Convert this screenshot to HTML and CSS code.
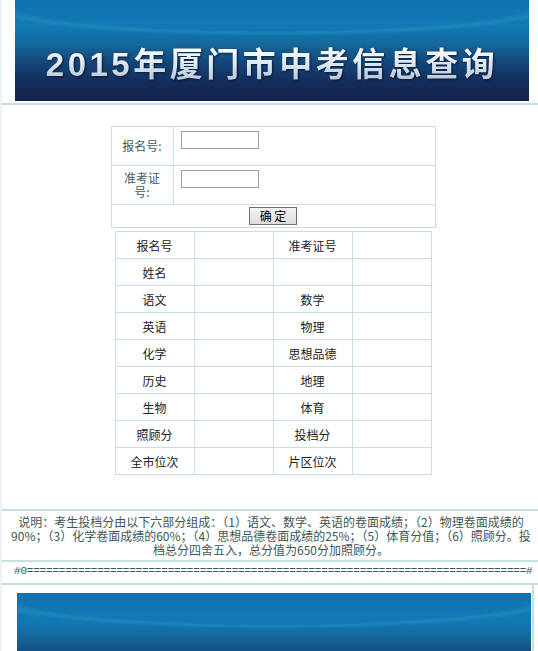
FILE: index.html
```html
<!DOCTYPE html>
<html lang="zh-CN">
  <head>
    <meta charset="UTF-8" />
    <title>2015年厦门市中考信息查询</title>
    <link rel="stylesheet" href="styles.css">
  </head>
  <body>
    <div class="page">
      <div class="banner">
        <h1>2015年厦门市中考信息查询</h1>
      </div>

      <div class="main">
        <form class="query-form" onsubmit="return false;">
          <table class="form-table">
            <tr>
              <td class="label">报名号:</td>
              <td class="field"><input type="text" name="bmh" /></td>
            </tr>
            <tr>
              <td class="label">准考证<br />号:</td>
              <td class="field"><input type="text" name="zkzh" /></td>
            </tr>
            <tr>
              <td colspan="2" class="submit"><button type="submit">确 定</button></td>
            </tr>
          </table>
        </form>

        <table class="score-table">
          <tr><td>报名号</td><td></td><td>准考证号</td><td></td></tr>
          <tr><td>姓名</td><td></td><td></td><td></td></tr>
          <tr><td>语文</td><td></td><td>数学</td><td></td></tr>
          <tr><td>英语</td><td></td><td>物理</td><td></td></tr>
          <tr><td>化学</td><td></td><td>思想品德</td><td></td></tr>
          <tr><td>历史</td><td></td><td>地理</td><td></td></tr>
          <tr><td>生物</td><td></td><td>体育</td><td></td></tr>
          <tr><td>照顾分</td><td></td><td>投档分</td><td></td></tr>
          <tr><td>全市位次</td><td></td><td>片区位次</td><td></td></tr>
        </table>
      </div>

      <p class="note">
        说明：考生投档分由以下六部分组成：（1）语文、数学、英语的卷面成绩；（2）物理卷面成绩的90%；（3）化学卷面成绩的60%；（4）思想品德卷面成绩的25%；（5）体育分值；（6）照顾分。投档总分四舍五入，总分值为650分加照顾分。
      </p>

      <p class="divider">#0==============================================================================#</p>

      <div class="footer">
        <div class="banner banner-bottom"></div>
      </div>
    </div>
  </body>
</html>
```

FILE: styles.css
```css
html, body {
  margin: 0;
  padding: 0;
  background: #fff;
}
body {
  font-family: "Noto Sans CJK SC", "DejaVu Sans", sans-serif;
  font-size: 12px;
  color: #333;
  height: 651px;
  overflow: hidden;
}
.page {
  border-left: 2px solid #eaf3f9;
  min-height: 651px;
}

/* header picture */
.banner {
  margin: 0 9px 0 13px;
  height: 101px;
  background:
    radial-gradient(ellipse 62% 36px at 50% 0, rgba(20, 110, 170, 0) 85%, rgba(40, 160, 200, 0.4) 92%, rgba(30, 140, 190, 0) 100%),
    linear-gradient(to bottom, #1272b0 0, #1278b3 28%, #146a9e 42%, #14457a 62%, #132c5a 82%, #13214c 100%);
  display: flex;
  align-items: center;
  justify-content: center;
}
.banner h1 {
  margin: 22px 0 0;
  font-family: "Liberation Sans", "Noto Sans CJK SC", sans-serif;
  font-size: 33px;
  font-weight: bold;
  letter-spacing: 3.5px;
  color: #e6eef6;
  background: linear-gradient(to bottom, #ffffff 20%, #dbe6f0 55%, #a9bccf 100%);
  -webkit-background-clip: text;
  background-clip: text;
  -webkit-text-fill-color: transparent;
  filter: drop-shadow(1px 1px 1px rgba(5, 15, 40, 0.8));
}

.main {
  border-top: 2px solid #c6e0e1;
  margin-top: 2px;
  padding: 21px 0 34px;
}

/* query form */
.query-form {
  margin: 0;
}
.form-table {
  margin: 0 auto;
  width: 325px;
  border-collapse: collapse;
  transform: translateX(3px);
}
.form-table td {
  border: 1px solid #c6e0e1;
  padding: 0;
}
.form-table .label {
  width: 61px;
  height: 38px;
  text-align: center;
  color: #3d5c5c;
  line-height: 14px;
  font-size: 12px;
}
.form-table .field {
  vertical-align: top;
  padding: 3px 0 0 7px;
}
.form-table input {
  width: 74px;
  height: 14px;
  border: 1px solid #a0a0a0;
  padding: 1px;
  margin: 0;
}
.form-table .submit {
  text-align: center;
  height: 22px;
}
.form-table button {
  width: 48px;
  height: 18px;
  font-family: inherit;
  font-size: 12px;
  line-height: 14px;
  padding: 0;
  border: 1px solid #707070;
  background: linear-gradient(#f4f4f4, #dcdcdc);
  color: #000;
}

/* score table */
.score-table {
  margin: 3px auto 0;
  width: 317px;
  border-collapse: collapse;
  transform: translateX(3px);
}
.score-table td {
  border: 1px solid #c6e0e1;
  height: 26px;
  padding: 0;
  text-align: center;
  color: #222;
  font-size: 12px;
  width: 25%;
}

.note {
  margin: 0;
  border-top: 2px solid #c6e0e1;
  border-bottom: 2px solid #c6e0e1;
  padding: 4px 6px 3px 8px;
  text-align: center;
  color: #3d5656;
  line-height: 14px;
  font-size: 12px;
}
.divider {
  margin: 0;
  padding: 3px 6px 0 12px;
  height: 18px;
  border-bottom: 2px solid #c6e0e1;
  color: #3d5656;
  font-family: "Liberation Mono", monospace;
  font-size: 11px;
  white-space: nowrap;
  overflow: hidden;
  letter-spacing: -0.2px;
}

.footer {
  padding-top: 8px;
  margin-right: 4px;
  border-right: 2px solid #c6e0e1;
}
.banner-bottom {
  margin: 0 1px 0 15px;
}
```
